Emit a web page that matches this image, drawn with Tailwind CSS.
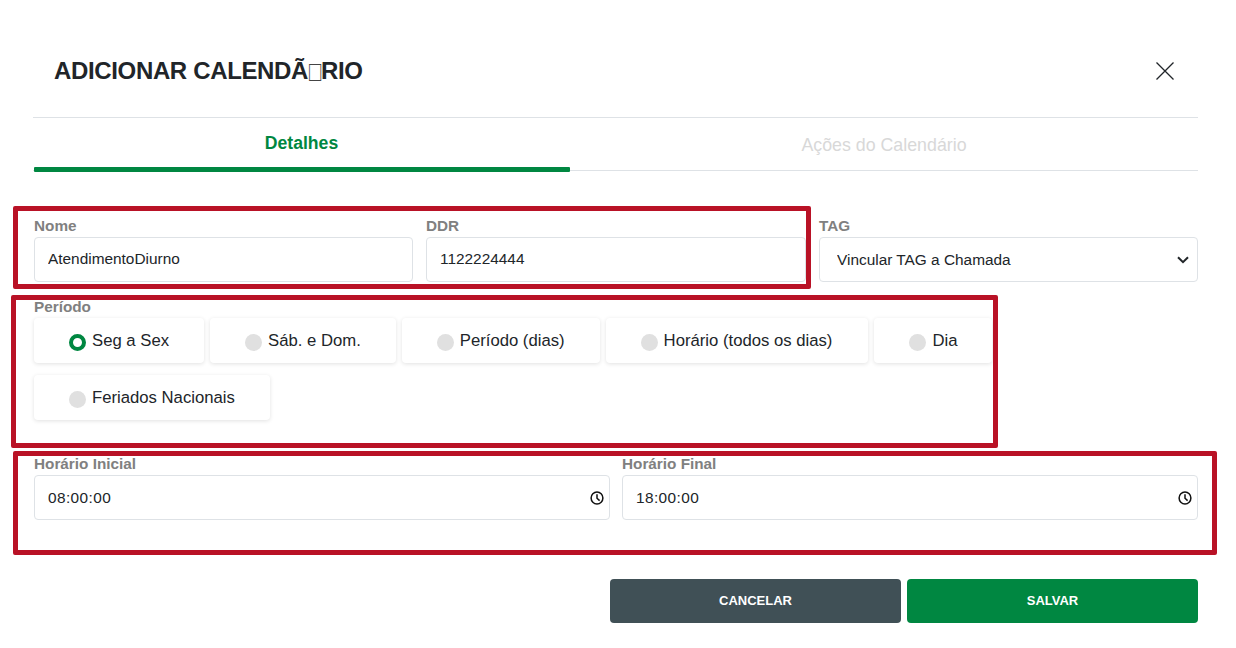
<!doctype html>
<html lang="pt">
<head>
<meta charset="utf-8">
<script src="https://cdn.jsdelivr.net/npm/@tailwindcss/browser@4"></script>
</head>
<body class="bg-white">
<div class="relative w-[1236px] h-[648px] overflow-hidden bg-white font-['Liberation_Sans',Arial,sans-serif] text-[#212529]">
  <header class="flex items-center justify-between h-[117px] pt-[25px] pl-[54px] pr-[61px]">
    <h1 class="text-[24px] leading-[36px] font-bold text-[#212529] tracking-[-0.35px] whitespace-nowrap">ADICIONAR CALENDÃ<span class="inline-block w-[13px] text-center font-normal text-[#444] scale-x-[0.85] scale-y-[1.2] tracking-normal">□</span>RIO</h1>
    <button class="w-[20px] h-[20px] text-[#212529]" aria-label="Fechar">
      <svg viewBox="0 0 20 20" class="w-[20px] h-[20px]" fill="none" stroke="currentColor" stroke-width="1.3"><path d="M1.5 1.5L18.5 18.5M18.5 1.5L1.5 18.5"/></svg>
    </button>
  </header>

  <nav class="ml-[33px] w-[1165px] h-[54px] border-t border-b border-[#dee2e6] grid grid-cols-[537px_1fr] box-border">
    <div class="relative flex items-start justify-center pt-[15px] text-[17.6px] leading-[20px] font-bold text-[#008741]">
      <span>Detalhes</span>
      <div class="absolute left-[1px] right-0 bottom-[-2px] h-[5px] bg-[#008741] rounded-[1px]"></div>
    </div>
    <div class="flex items-start justify-center pt-[17px] text-[17.8px] leading-[20px] text-[#d8d8d8]">Ações do Calendário</div>
  </nav>

  <form class="ml-[34px] w-[1164px]">
    <div class="grid grid-cols-[379px_380px_379px] gap-x-[13px] pt-[46px]">
      <label class="block">
        <span class="block text-[15.3px] leading-[18px] font-bold text-[#808080] h-[20px]">Nome</span>
        <input value="AtendimentoDiurno" class="block w-full h-[45px] pl-[13px] pr-[13px] pb-[1px] text-[15.4px] border border-[#dee2e6] rounded-[4px] bg-white text-[#212529] outline-none">
      </label>
      <label class="block">
        <span class="block text-[15.3px] leading-[18px] font-bold text-[#808080] h-[20px]">DDR</span>
        <input value="1122224444" class="block w-full h-[45px] pl-[13px] pr-[13px] pb-[1px] text-[15.4px] border border-[#dee2e6] rounded-[4px] bg-white text-[#212529] outline-none">
      </label>
      <label class="block">
        <span class="block text-[15.3px] leading-[18px] font-bold text-[#808080] h-[20px]">TAG</span>
        <span class="relative block">
          <select class="block appearance-none w-full h-[45px] pl-[17px] pr-[30px] pt-[1px] text-[15.4px] border border-[#dee2e6] rounded-[4px] bg-white text-[#212529] outline-none">
            <option>Vincular TAG a Chamada</option>
          </select>
          <svg viewBox="0 0 12 8" class="absolute right-[9px] top-[19px] w-[12px] h-[8px]" fill="none" stroke="#212529" stroke-width="2"><path d="M1 1.2L6 6.2L11 1.2"/></svg>
        </span>
      </label>
    </div>

    <div class="pt-[16px]">
      <span class="block text-[15.3px] leading-[18px] font-bold text-[#808080] h-[20px]">Período</span>
      <div class="flex flex-wrap gap-x-[6px] gap-y-[12px] w-[960px]">
        <div class="flex h-[45px] pl-[35px] pr-[35px] bg-white rounded-[4px] shadow-[0_1px_4px_rgba(0,0,0,0.12)] items-center">
          <span class="w-[17px] h-[17px] rounded-full border-[4px] border-[#008741] bg-white mt-[4px]"></span>
          <span class="ml-[6px] text-[16.7px] leading-[20px]">Seg a Sex</span>
        </div>
        <div class="flex h-[45px] pl-[35px] pr-[35px] bg-white rounded-[4px] shadow-[0_1px_4px_rgba(0,0,0,0.12)] items-center">
          <span class="w-[17px] h-[17px] rounded-full bg-[#e0e0e0] mt-[4px]"></span>
          <span class="ml-[6px] text-[16.7px] leading-[20px]">Sáb. e Dom.</span>
        </div>
        <div class="flex h-[45px] pl-[35px] pr-[35px] bg-white rounded-[4px] shadow-[0_1px_4px_rgba(0,0,0,0.12)] items-center">
          <span class="w-[17px] h-[17px] rounded-full bg-[#e0e0e0] mt-[4px]"></span>
          <span class="ml-[6px] text-[16.7px] leading-[20px]">Período (dias)</span>
        </div>
        <div class="flex h-[45px] pl-[35px] pr-[36px] bg-white rounded-[4px] shadow-[0_1px_4px_rgba(0,0,0,0.12)] items-center">
          <span class="w-[17px] h-[17px] rounded-full bg-[#e0e0e0] mt-[4px]"></span>
          <span class="ml-[6px] text-[16.7px] leading-[20px]">Horário (todos os dias)</span>
        </div>
        <div class="flex h-[45px] pl-[35px] pr-[35px] bg-white rounded-[4px] shadow-[0_1px_4px_rgba(0,0,0,0.12)] items-center">
          <span class="w-[17px] h-[17px] rounded-full bg-[#e0e0e0] mt-[4px]"></span>
          <span class="ml-[6px] text-[16.7px] leading-[20px]">Dia</span>
        </div>
        <div class="flex h-[45px] pl-[35px] pr-[35px] bg-white rounded-[4px] shadow-[0_1px_4px_rgba(0,0,0,0.12)] items-center">
          <span class="w-[17px] h-[17px] rounded-full bg-[#e0e0e0] mt-[4px]"></span>
          <span class="ml-[6px] text-[16.7px] leading-[20px]">Feriados Nacionais</span>
        </div>
      </div>
    </div>

    <div class="grid grid-cols-2 gap-x-[12px] pt-[35px]">
      <label class="block">
        <span class="block text-[15.3px] leading-[18px] font-bold text-[#808080] h-[20px]">Horário Inicial</span>
        <span class="relative block">
          <input value="08:00:00" class="block w-full h-[45px] pl-[13px] pr-[30px] text-[15.4px] tracking-[0.4px] border border-[#dee2e6] rounded-[4px] bg-white text-[#212529] outline-none">
          <svg viewBox="0 0 14 14" class="absolute right-[6px] top-[16px] w-[14px] h-[14px]" fill="none" stroke="#111" stroke-width="1.5"><circle cx="7" cy="7" r="5.9"/><path d="M7 3.2V7.2L9.6 9.6"/></svg>
        </span>
      </label>
      <label class="block">
        <span class="block text-[15.3px] leading-[18px] font-bold text-[#808080] h-[20px]">Horário Final</span>
        <span class="relative block">
          <input value="18:00:00" class="block w-full h-[45px] pl-[13px] pr-[30px] text-[15.4px] tracking-[0.4px] border border-[#dee2e6] rounded-[4px] bg-white text-[#212529] outline-none">
          <svg viewBox="0 0 14 14" class="absolute right-[6px] top-[16px] w-[14px] h-[14px]" fill="none" stroke="#111" stroke-width="1.5"><circle cx="7" cy="7" r="5.9"/><path d="M7 3.2V7.2L9.6 9.6"/></svg>
        </span>
      </label>
    </div>

    <div class="flex justify-end gap-x-[6px] pt-[59px]">
      <button type="button" class="w-[291px] h-[44px] rounded-[4px] bg-[#405056] text-white text-[13px] font-bold">CANCELAR</button>
      <button type="button" class="w-[291px] h-[44px] rounded-[4px] bg-[#008741] text-white text-[13px] font-bold">SALVAR</button>
    </div>
  </form>

  <div class="absolute left-[13px] top-[206px] w-[798px] h-[83px] border-[5px] border-[#b91226] rounded-[2px] pointer-events-none"></div>
  <div class="absolute left-[11px] top-[295px] w-[987px] h-[153px] border-[5px] border-[#b91226] rounded-[2px] pointer-events-none"></div>
  <div class="absolute left-[13px] top-[451px] w-[1204px] h-[104px] border-[5px] border-[#b91226] rounded-[2px] pointer-events-none"></div>
</div>
</body>
</html>
